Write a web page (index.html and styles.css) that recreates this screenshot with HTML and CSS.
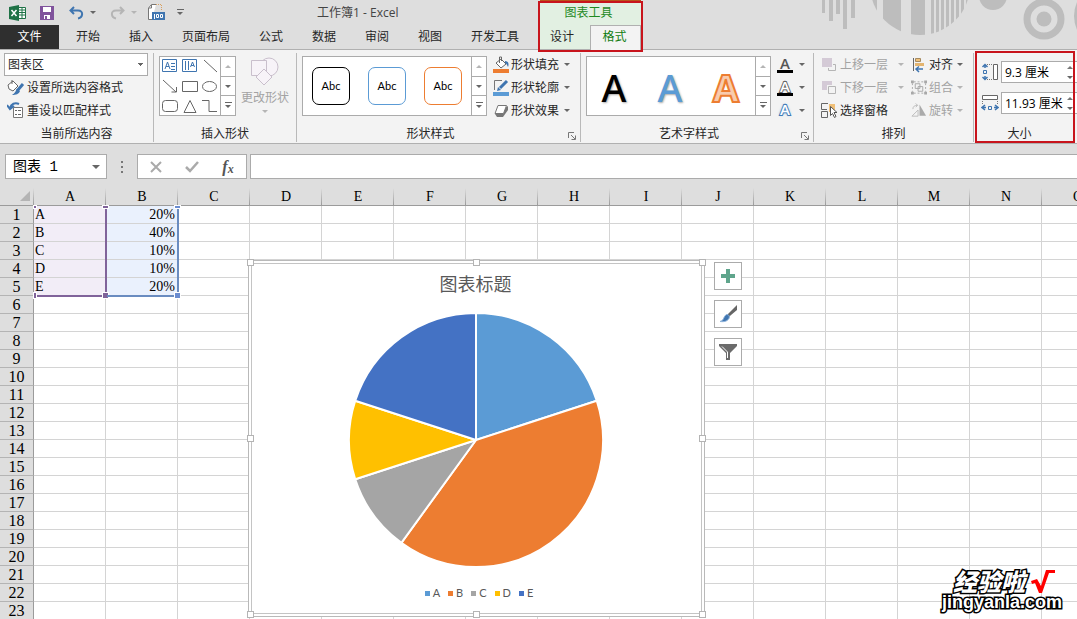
FILE: index.html
```html
<!DOCTYPE html>
<html lang="zh-CN">
<head>
<meta charset="utf-8">
<title>工作簿1 - Excel</title>
<link rel="stylesheet" href="styles.css">
</head>
<body>
<div class="app">
  <header class="header">
    <svg class="header-art" width="270" height="49" viewBox="0 0 270 49" aria-hidden="true">
      <defs><clipPath id="disc"><circle cx="113" cy="-15" r="50"/></clipPath></defs>
      <g fill="#bdbdbd">
        <path d="M15 0h3v13h-3zM22 0h4v21h-4zM29 0h4v14h-4zM36 0h4v29h-4zM44 0h4v18h-4z"/>
        <g clip-path="url(#disc)"><path d="M63 0h7v20h-7zM76 0h18v36H76zM104 0h14v36h-14zM124 0h3v36h-3zM129 0h3v36h-3zM134 0h3v36h-3zM139 0h3v36h-3zM144 0h3v36h-3zM149 0h3v36h-3zM154 0h3v36h-3zM159 0h4v36h-4z"/></g>
        <circle cx="186" cy="-4" r="14"/>
        <circle cx="237" cy="19" r="7.500"/>
        <path d="M270 2q-6 14 0 28z"/>
      </g>
      <circle cx="237" cy="19" r="17" fill="none" stroke="#bdbdbd" stroke-width="7"/>
    </svg>
    <div class="header-main">
      <div class="title-row">
        <svg class="app-logo" width="18" height="16" viewBox="0 0 18 16"><path fill="#fff" stroke="#1f7246" d="M9 2.500h7.500v11H9z"/><path stroke="#1f7246" d="M10 5h6M10 7.500h6M10 10h6M13 3v10"/><path fill="#1f7246" d="M0 2l10-2v16L0 14z"/><path stroke="#fff" stroke-width="1.500" d="M2.500 5l5 6M7.500 5l-5 6"/></svg>
        <button class="quick save" aria-label="保存"><svg width="14" height="14" viewBox="0 0 14 14"><path fill="#80539c" d="M0 0h14v14H0z"/><path fill="#fff" d="M3 1h8v5H3zM4 9h6v4H4z"/><path fill="#80539c" d="M5 10h2v3H5z"/></svg></button>
        <button class="quick undo" aria-label="撤消"><svg width="15" height="14" viewBox="0 0 15 14"><path fill="none" stroke="#3f75b0" stroke-width="2" d="M5 1L1.500 4.500 5 8M2 4.500h7c6 0 5 7 0 8"/></svg><i class="caret"></i></button>
        <button class="quick redo" aria-label="恢复" disabled><svg width="15" height="14" viewBox="0 0 15 14"><path fill="none" stroke="#b5b5b5" stroke-width="2" d="M10 1l3.500 3.500L10 8M13 4.500H6c-6 0-5 7 0 8"/></svg><i class="caret"></i></button>
        <button class="quick zoom100" aria-label="缩放到 100%"><svg width="17" height="17" viewBox="0 0 17 17"><path fill="#fff" stroke="#777" d="M4 15.500H.500V4l3-3.500H8"/><path fill="none" stroke="#777" d="M3.500 1v3H1"/><path fill="none" stroke="#d8a060" stroke-dasharray="1 1" d="M8 .500h5.500V7"/><path fill="#3f75b0" d="M4 8h13v8H4z"/><path fill="none" stroke="#fff" d="M6.500 10v5M8.500 10.500h2v3h-2zM12.500 10.500h2v3h-2z"/></svg></button>
        <button class="quick more" aria-label="自定义快速访问工具栏"><i class="bar-caret"></i></button>
        <h1 class="doc-title">工作簿1 - Excel</h1>
      </div>
      <nav class="tabs">
        <button class="tab file">文件</button>
        <button class="tab">开始</button>
        <button class="tab">插入</button>
        <button class="tab">页面布局</button>
        <button class="tab">公式</button>
        <button class="tab">数据</button>
        <button class="tab">审阅</button>
        <button class="tab">视图</button>
        <button class="tab">开发工具</button>
      </nav>
    </div>
    <div class="contextual">
      <div class="contextual-title">图表工具</div>
      <nav class="tabs contextual-tabs">
        <button class="tab">设计</button>
        <button class="tab active">格式</button>
      </nav>
      <div class="mark mark-tabs"></div>
    </div>
  </header>

  <section class="ribbon">
    <div class="group g-selection">
      <div class="group-body stack">
        <select class="area-select" aria-label="图表元素"><option>图表区</option></select>
        <button class="cmd"><svg width="18" height="17" viewBox="0 0 18 17"><path fill="#fff" stroke="#666" d="M1 6l5-4 5 5-5 5-4-2zM5 5V1"/><path stroke="#3f75b0" stroke-width="3" d="M16 5l-6 7"/><path fill="#3f75b0" d="M10 10l3 2c-1 3-4 4-8 4 3-2 3-3 5-6z"/></svg>设置所选内容格式</button>
        <button class="cmd"><svg width="18" height="17" viewBox="0 0 18 17"><path fill="#fff" stroke="#777" d="M6.500 5.500h9v10h-9z"/><path stroke="#666" d="M8 8.500h2M11 8.500h3M8 12.500h2M11 12.500h3"/><path fill="none" stroke="#3f75b0" stroke-width="2" d="M12 2C8 0 4 2 3 6M0 3l3 4 4-3"/></svg>重设以匹配样式</button>
      </div>
      <div class="group-foot"><span>当前所选内容</span></div>
    </div>

    <div class="group g-shapes">
      <div class="group-body">
        <div class="gallery">
          <div class="gallery-items">
            <svg width="60" height="58" viewBox="0 0 60 58" fill="none" stroke="#666"><path stroke="#3f75b0" d="M2.500 2.500h14v12h-14zM5 12l2.500-7L10 12M6 9.500h3M11 6.500h4M11 9.500h4M11 12.500h4M22.500 2.500h14v12h-14zM25.500 4v9M28.500 4v9M30.500 10l2-5 2 5M31 8.500h3"/><path d="M44 3l13 12M3 23l13 12M16.500 30v5h-5M22.500 24.500h15v10h-15zM24 55.500l6-12 6 12zM42 43.500h7v11h8"/><ellipse cx="49.500" cy="29.500" rx="7" ry="5"/><rect x="2.500" y="43.500" width="15" height="11" rx="3"/></svg>
          </div>
          <div class="gallery-scroll"><button aria-label="上一行" disabled><i class="caret up"></i></button><button aria-label="下一行"><i class="caret"></i></button><button aria-label="其他形状"><i class="bar-caret"></i></button></div>
        </div>
        <button class="big-cmd" disabled><svg width="30" height="30" viewBox="0 0 30 30" fill="#f7f3f8" stroke="#c9bfcc"><circle cx="19" cy="10" r="9"/><path d="M1.500 3.500h15v15h-15z"/><path d="M14 12l8 8-8 8-8-8z"/></svg><span>更改形状</span><i class="caret"></i></button>
      </div>
      <div class="group-foot"><span>插入形状</span></div>
    </div>

    <div class="group g-styles">
      <div class="group-body">
        <div class="gallery wide">
          <div class="gallery-items swatches">
            <button class="swatch black">Abc</button>
            <button class="swatch blue">Abc</button>
            <button class="swatch orange">Abc</button>
          </div>
          <div class="gallery-scroll"><button aria-label="上一行" disabled><i class="caret up"></i></button><button aria-label="下一行"><i class="caret"></i></button><button aria-label="其他样式"><i class="bar-caret"></i></button></div>
        </div>
        <div class="stack">
          <button class="cmd"><svg width="17" height="17" viewBox="0 0 17 17"><path fill="#fff" stroke="#666" d="M3 7l5-4 5 5-5 4zM6.500 7V1h2v4"/><path fill="#3f75b0" d="M12 5c4 0 4 4 3 6-1-2-1-3-3-4z"/><path fill="#ed7d31" d="M0 13h16v4H0z"/></svg>形状填充<i class="caret"></i></button>
          <button class="cmd"><svg width="17" height="17" viewBox="0 0 17 17"><path fill="none" stroke="#777" d="M9 1.500H1.500V11"/><path stroke="#3f75b0" stroke-width="3" d="M14 2L7 9"/><path fill="#3f75b0" d="M5 8l3 3-4 1z"/><path fill="#5b9bd5" d="M0 13h16v4H0z"/></svg>形状轮廓<i class="caret"></i></button>
          <button class="cmd"><svg width="17" height="17" viewBox="0 0 17 17"><path fill="#777" d="M2 12l2 3h6l5-7V4z"/><path fill="#fff" stroke="#777" d="M5 3.500h8.500l-3 8H2z"/></svg>形状效果<i class="caret"></i></button>
        </div>
      </div>
      <div class="group-foot"><span>形状样式</span><button class="launcher" aria-label="设置形状格式"><svg width="8" height="8" viewBox="0 0 8 8" fill="none" stroke="#777"><path d="M.500 6V.500H6M3 3l4 4M7.500 3.500v4h-4"/></svg></button></div>
    </div>

    <div class="group g-wordart">
      <div class="group-body">
        <div class="gallery wide">
          <div class="gallery-items letters">
            <button class="letter l-black">A</button>
            <button class="letter l-blue">A</button>
            <button class="letter l-orange">A</button>
          </div>
          <div class="gallery-scroll"><button aria-label="上一行" disabled><i class="caret up"></i></button><button aria-label="下一行"><i class="caret"></i></button><button aria-label="其他艺术字"><i class="bar-caret"></i></button></div>
        </div>
        <div class="stack">
          <button class="cmd text-cmd" aria-label="文本填充"><b class="glyph fill">A</b><i class="caret"></i></button>
          <button class="cmd text-cmd" aria-label="文本轮廓"><b class="glyph outline">A</b><i class="caret"></i></button>
          <button class="cmd text-cmd" aria-label="文本效果"><b class="glyph glow">A</b><i class="caret"></i></button>
        </div>
      </div>
      <div class="group-foot"><span>艺术字样式</span><button class="launcher" aria-label="设置文本效果格式"><svg width="8" height="8" viewBox="0 0 8 8" fill="none" stroke="#777"><path d="M.500 6V.500H6M3 3l4 4M7.500 3.500v4h-4"/></svg></button></div>
    </div>

    <div class="group g-arrange">
      <div class="group-body">
        <div class="stack order">
          <button class="cmd" disabled><svg width="17" height="17" viewBox="0 0 17 17"><path fill="#d4cad6" d="M1 2h10v9H1z"/><path fill="none" stroke="#b5b5b5" d="M12 8.500h2.500v6h-7V12"/></svg>上移一层<i class="caret"></i></button>
          <button class="cmd" disabled><svg width="17" height="17" viewBox="0 0 17 17"><path fill="#d4cad6" d="M1 2h10v4H6v5H1z"/><path fill="none" stroke="#b5b5b5" d="M7.500 7.500h7v7h-7z"/></svg>下移一层<i class="caret"></i></button>
          <button class="cmd"><svg width="17" height="17" viewBox="0 0 17 17"><path fill="#f0c078" d="M8 2h6v8H8z"/><path fill="none" stroke="#666" d="M7 1.500H.500v6H6M.500 9.500h6v6h-6z"/><path fill="#fff" stroke="#555" d="M9.500 4.500v9l2-2 2 4 1.500-1-2-4h3z"/></svg>选择窗格</button>
        </div>
        <div class="stack align">
          <button class="cmd"><svg width="14" height="17" viewBox="0 0 14 17"><path stroke="#666" d="M1.500 2v13"/><path fill="#f0c078" stroke="#a58a60" d="M3.500 2.500h5v3h-5z"/><path fill="#e4b570" d="M3 7h9v3H3z"/><path fill="none" stroke="#3f75b0" stroke-width="1.500" d="M11 13H4M7 10.500L4 13l3 3"/></svg>对齐<i class="caret"></i></button>
          <button class="cmd" disabled><svg width="17" height="17" viewBox="0 0 17 17" fill="none" stroke="#a8a8a8"><path d="M3 2.500h11M3 14.500h11M1.500 4v9M15.500 4v9" stroke-dasharray="2 2"/><path d="M4.500 4.500h5v5h-5zM7.500 7.500h5v5h-5z"/><path fill="#a8a8a8" stroke="none" d="M0 1h3v3H0zM14 1h3v3h-3zM0 13h3v3H0zM14 13h3v3h-3z"/></svg>组合<i class="caret"></i></button>
          <button class="cmd" disabled><svg width="17" height="17" viewBox="0 0 17 17"><path fill="#aaa" d="M9 2v12h7z"/><path fill="none" stroke="#bbb" d="M7.500 8v6.500H1zM2 7c0-3 2-4 5-4M5 1l2 2-2 2"/></svg>旋转<i class="caret"></i></button>
        </div>
      </div>
      <div class="group-foot"><span>排列</span></div>
    </div>

    <div class="group g-size">
      <div class="group-body sizes">
        <label class="size-row"><svg width="18" height="18" viewBox="0 0 18 18"><path fill="none" stroke="#3f75b0" stroke-width="1.500" d="M4 1v4M1.500 4L4 1.500 6.500 4M4 13v4M1.500 14L4 16.500 6.500 14"/><path fill="none" stroke="#3f75b0" d="M2.500 7.500h3v3h-3z"/><path fill="none" stroke="#777" stroke-dasharray="1 1" d="M6 1.500h5M6 16.500h5"/><path fill="#fff" stroke="#666" d="M12.500 1.500h4v15h-4z"/></svg><input class="size-input" aria-label="形状高度" value="9.3 厘米"><span class="spin"><i class="caret up"></i><i class="caret"></i></span></label>
        <label class="size-row"><svg width="18" height="18" viewBox="0 0 18 18"><path fill="#fff" stroke="#666" d="M1.500 1.500h15v4h-15z"/><path fill="none" stroke="#777" stroke-dasharray="1 1" d="M1.500 7v4M16.500 7v4"/><path fill="none" stroke="#3f75b0" stroke-width="1.500" d="M4 11l-3 2.500L4 16M1 13.500h4M14 11l3 2.500-3 2.500M17 13.500h-4"/><path fill="none" stroke="#3f75b0" d="M7.500 12.500h3v3h-3z"/></svg><input class="size-input" aria-label="形状宽度" value="11.93 厘米"><span class="spin"><i class="caret up"></i><i class="caret"></i></span></label>
      </div>
      <div class="group-foot"><span>大小</span></div>
      <div class="mark mark-size"></div>
    </div>
  </section>

  <section class="formula-bar">
    <button class="name-box"><span>图表 1</span><i class="caret big"></i></button>
    <span class="dots"><i></i><i></i><i></i></span>
    <div class="fx-buttons">
      <button aria-label="取消"><svg width="12" height="12" viewBox="0 0 12 12"><path stroke="#aaa" stroke-width="2" d="M1 1l10 10M11 1L1 11"/></svg></button>
      <button aria-label="输入"><svg width="14" height="12" viewBox="0 0 14 12"><path fill="none" stroke="#aaa" stroke-width="2.500" d="M1 6l4 4 8-9"/></svg></button>
      <button class="fx" aria-label="插入函数">f<sub>x</sub></button>
    </div>
    <input class="formula-input" aria-label="编辑栏">
  </section>

  <main class="sheet">
    <table class="grid">
      <thead><tr id="columns"><th class="corner"><svg width="10" height="10" viewBox="0 0 10 10"><path fill="#b4b4b4" d="M10 0v10H0z"/></svg></th></tr></thead>
      <tbody id="rows"></tbody>
    </table>

    <div class="range range-a"><i class="tl"></i><i class="tr"></i><i class="bl"></i><i class="br"></i></div>
    <div class="range range-b"><i class="tr"></i><i class="br"></i></div>

    <figure class="chart">
      <div class="plot">
        <figcaption class="chart-title">图表标题</figcaption>
        <svg class="pie" width="256" height="256" viewBox="-129 -129 258 258" stroke="#fff" stroke-width="2" stroke-linejoin="round">
          <path fill="#5b9bd5" d="M0 0V-128A128 128 0 0 1 121.700 -39.600z"/>
          <path fill="#ed7d31" d="M0 0L121.700 -39.600A128 128 0 0 1 -75.200 103.600z"/>
          <path fill="#a5a5a5" d="M0 0L-75.200 103.600A128 128 0 0 1 -121.700 39.600z"/>
          <path fill="#ffc000" d="M0 0L-121.700 39.600A128 128 0 0 1 -121.700 -39.600z"/>
          <path fill="#4472c4" d="M0 0L-121.700 -39.600A128 128 0 0 1 0 -128z"/>
        </svg>
        <ul class="legend"><li class="k1">A</li><li class="k2">B</li><li class="k3">C</li><li class="k4">D</li><li class="k5">E</li></ul>
      </div>
      <i class="handle n w"></i><i class="handle n c"></i><i class="handle n e"></i>
      <i class="handle m w"></i><i class="handle m e"></i>
      <i class="handle s w"></i><i class="handle s c"></i><i class="handle s e"></i>
    </figure>

    <div class="chart-tools">
      <button aria-label="图表元素"><svg width="20" height="20" viewBox="0 0 20 20"><path fill="#5fa58c" d="M8 3h4v5h5v4h-5v5H8v-5H3V8h5z"/></svg></button>
      <button aria-label="图表样式"><svg width="20" height="20" viewBox="0 0 20 20"><path fill="#666" d="M19 1v5l-6 5-2-2zM11 9l2 2-2 2-2-2z"/><path fill="#3f75b0" stroke="#8fb4dc" d="M9 10.500c2 0 3 2 2 4-2 3-5 3.500-9 3 3-1 3-2 4-4s2-3 3-3z"/></svg></button>
      <button aria-label="图表筛选器"><svg width="20" height="20" viewBox="0 0 20 20"><path fill="#6b6b6b" d="M1 2h18v2l-7 7v7H8v-7L1 4z"/><path fill="none" stroke="#fff" d="M4 4.500l5.500 5.500v6"/></svg></button>
    </div>
  </main>

  <div class="watermark">
    <div class="wm-name"><span>经验啦</span><svg width="24" height="24" viewBox="0 0 24 24"><path fill="#f00" d="M0 12l6-2 4 7L15 1h9v3h-6l-7 20H8L4 14l-3 1z"/></svg></div>
    <div class="wm-url">jingyanla.com</div>
  </div>
</div>
<script src="grid.js"></script>
</body>
</html>
```
FILE: grid.js
```js
const columns = "ABCDEFGHIJKLMNO".split("");
const data = [["A", "20%"], ["B", "40%"], ["C", "10%"], ["D", "10%"], ["E", "20%"]];
const rowCount = 23;

const head = document.getElementById("columns");
columns.forEach(name => {
  const th = document.createElement("th");
  th.scope = "col";
  th.textContent = name;
  head.append(th);
});

const body = document.getElementById("rows");
for (let r = 0; r < rowCount; r++) {
  const tr = body.insertRow();
  const th = document.createElement("th");
  th.scope = "row";
  th.textContent = r + 1;
  tr.append(th);
  columns.forEach((_, c) => {
    const td = tr.insertCell();
    if (data[r] && data[r][c]) {
      td.textContent = data[r][c];
      td.className = c === 0 ? "category" : "value";
    }
  });
}
```
FILE: styles.css
```css
* { box-sizing: border-box; }

body {
  margin: 0;
  font: 12px/16px "Open Sans", "Noto Sans CJK SC", sans-serif;
  color: #262626;
  background: #dedede;
}

button, input, select {
  font: inherit;
  color: inherit;
  margin: 0;
  padding: 0;
  border: 0;
  border-radius: 0;
  background: none;
}

svg { display: block; flex: none; }

.app {
  position: relative;
  height: 100vh;
  display: flex;
  flex-direction: column;
  overflow: hidden;
}

/* Carets */
.caret {
  flex: none;
  width: 0;
  height: 0;
  border: 3px solid transparent;
  border-top-color: #666;
  border-bottom-width: 0;
}
.caret.up { border-width: 0 3px 3px; border-bottom-color: #777; }
.caret.big { border-width: 4px 4px 0; }
:disabled .caret { border-top-color: #b5b5b5; }
:disabled .caret.up { border-bottom-color: #b5b5b5; }
.bar-caret {
  display: block;
  width: 7px;
  height: 7px;
  border-top: 1px solid #666;
  padding-top: 2px;
}
.bar-caret::after {
  content: "";
  display: block;
  width: 0;
  border: 3px solid transparent;
  border-top-color: #666;
  border-bottom: 0;
}

/* Header */
.header { position: relative; display: flex; flex: none; }
.header-art { position: absolute; top: 0; right: 0; }
.header-main { width: 540px; }
.title-row { display: flex; align-items: center; height: 25px; padding-left: 9px; }
.quick { display: flex; align-items: center; gap: 6px; height: 22px; }
.save { margin-left: 13px; }
.undo { margin-left: 15px; }
.redo { margin-left: 14px; }
.zoom100 { margin-left: 11px; }
.more { margin-left: 12px; }
.doc-title { margin: 0 0 0 133px; font-size: 12px; font-weight: 400; color: #444; }

.tabs { display: flex; gap: 1px; }
.tab { height: 24px; padding: 0 14px; white-space: nowrap; }
.tab.file { width: 59px; margin-right: 2px; background: #2f2f2f; color: #fff; }
.contextual { position: relative; width: 101px; border-top: 3px solid #b9541c; background: #e2f0e2; }
.contextual-title { height: 22px; line-height: 20px; text-align: center; color: #1e8a1e; padding-right: 4px; }
.contextual-tabs { gap: 0; }
.contextual-tabs .tab { width: 50px; padding: 0 6px 0 0; }
.contextual-tabs .active {
  position: relative;
  flex: 1;
  height: 25px;
  margin-bottom: -1px;
  padding: 0 2px 2px 0;
  z-index: 1;
  border: 1px solid #b0b0b0;
  border-bottom: 0;
  background: #f3f3f3;
  color: #107c10;
}
.mark { position: absolute; border: 2px solid #c8141c; z-index: 2; pointer-events: none; }
.mark-tabs { inset: -2px -2px -3px -2px; }
.mark-size { inset: -2px 2px -1px 1px; }

/* Ribbon */
.ribbon {
  display: flex;
  flex: none;
  padding: 3px 0 1px;
  background: #f3f3f3;
  border-top: 1px solid #b0b0b0;
  border-bottom: 1px solid #b0b0b0;
}
.group { position: relative; display: flex; flex-direction: column; flex: none; border-right: 1px solid #b9b9b9; }
.group-body { display: flex; height: 72px; }
.group-foot { display: flex; height: 17px; padding-top: 1px; }
.group-foot span { flex: 1; text-align: center; }
.launcher { width: 16px; display: flex; justify-content: center; align-items: center; padding-top: 4px; }
.g-selection { width: 154px; }
.g-shapes { width: 143px; }
.g-styles { width: 284px; }
.g-wordart { width: 233px; }
.g-arrange { width: 160px; }
.g-size { flex: 1; min-width: 0; border-right: 0; }
.g-size .group-foot { padding-right: 12px; }

.stack { display: flex; flex-direction: column; }
.cmd { display: flex; align-items: center; height: 23px; gap: 2px; white-space: nowrap; }
.cmd .caret { margin-left: 3px; }
.cmd:disabled, .big-cmd:disabled { color: #a3a3a3; }
.g-selection .stack { padding: 0 5px 0 4px; }
.g-selection .cmd { padding-left: 3px; }
.area-select {
  height: 23px;
  padding-left: 3px;
  border: 1px solid #ababab;
  appearance: none;
  background-color: #fff;
  background-image: linear-gradient(#666, #666), linear-gradient(#666, #666), linear-gradient(#666, #666);
  background-repeat: no-repeat;
  background-position: right 4px top 9px, right 5px top 10px, right 6px top 11px;
  background-size: 5px 1px, 3px 1px, 1px 1px;
}

.gallery { display: flex; flex: none; width: 77px; height: 60px; margin: 3px 0 0 5px; border: 1px solid #ababab; background: #fff; }
.gallery.wide { width: 185px; }
.gallery-items { flex: 1; min-width: 0; }
.gallery-scroll { display: flex; flex-direction: column; width: 15px; border-left: 1px solid #ababab; }
.gallery-scroll button { flex: 1; display: flex; align-items: center; justify-content: center; }
.gallery-scroll button + button { border-top: 1px solid #ababab; }
.big-cmd { display: flex; flex-direction: column; align-items: center; width: 58px; padding-top: 4px; }
.big-cmd span { margin: 3px 0 4px; }

.swatches { display: flex; align-items: center; gap: 18px; padding-left: 9px; }
.swatch { width: 38px; height: 38px; border: 1px solid; border-radius: 7px; font: 11px/16px Lato, sans-serif; color: #000; background: #fff; }
.swatch.black { border-color: #000; }
.swatch.blue { border-color: #5b9bd5; }
.swatch.orange { border-color: #ed7d31; }
.g-styles .stack { margin-left: 6px; }
.g-styles .cmd { gap: 1px; }
.g-styles .cmd .caret { margin-left: 4px; }

.letters { display: flex; align-items: center; gap: 18px; padding: 2px 0 0 8px; }
.letter { width: 38px; font: 700 38px/40px "Noto Sans", sans-serif; }
.l-black { color: #000; font-weight: 500; text-shadow: 1px 1px 2px #aaa; }
.l-blue { color: #5b9bd5; font-weight: 500; text-shadow: 1px 1px 2px #aaa; }
.l-orange { color: #f8cbad; -webkit-text-stroke: 2px #ed7d31; }
.g-wordart .stack { margin-left: 6px; }
.glyph { width: 16px; height: 16px; text-align: center; font: 600 15px/13px "Open Sans", sans-serif; paint-order: stroke fill; }
.text-cmd .caret { margin-left: 4px; }
.fill { border-bottom: 3px solid #000; color: #555; }
.outline { border-bottom: 3px solid #000; color: #fff; -webkit-text-stroke: 2px #666; }
.glow { color: #fff; -webkit-text-stroke: 2px #3f75b0; text-shadow: 0 0 3px #5b9bd5; }

.order { margin-left: 7px; width: 90px; }
.order .cmd .caret { margin-left: 8px; }
.align .cmd svg { width: 16px; }
.align .cmd .caret { margin-left: 2px; }
.align .cmd { gap: 2px; }

.sizes { flex-direction: column; gap: 9px; padding: 8px 0 0 7px; }
.size-row { display: flex; align-items: center; gap: 2px; height: 22px; }
.size-input { flex: 1; min-width: 0; height: 22px; padding-left: 3px; border: 1px solid #ababab; border-right: 0; background: #fff; color: #000; }
.spin { display: flex; flex: none; flex-direction: column; justify-content: space-around; width: 10px; height: 22px; margin-left: -2px; border: solid #ababab; border-width: 1px 0; background: #fff; }

/* Formula bar */
.formula-bar { display: flex; flex: none; height: 35px; padding-top: 10px; padding-left: 5px; }
.formula-bar > * { height: 25px; }
.name-box { display: flex; align-items: center; justify-content: space-between; width: 102px; padding: 0 6px 0 7px; border: 1px solid #ababab; background: #fff; font: 14px/20px "Liberation Mono", "Noto Sans CJK SC", monospace; color: #000; }
.dots { display: flex; flex-direction: column; align-items: center; justify-content: center; gap: 3px; width: 30px; }
.dots i { width: 2px; height: 2px; background: #777; }
.fx-buttons { display: flex; width: 110px; border: 1px solid #ababab; background: #fff; }
.fx-buttons button { flex: 1; display: flex; align-items: center; justify-content: center; }
.fx-buttons .fx { font: italic bold 16px/20px "Liberation Serif", serif; color: #555; }
.fx sub { font-size: 12px; line-height: 12px; vertical-align: baseline; padding-top: 4px; }
.formula-input { flex: 1; min-width: 0; margin-left: 3px; border: 1px solid #ababab; border-right: 0; background: #fff; }

/* Worksheet */
.sheet { position: relative; flex: 1; min-height: 0; overflow: hidden; }
.grid { width: 1114px; table-layout: fixed; border-collapse: separate; border-spacing: 0; background: #fff; font: 14px/17px "Liberation Serif", "Noto Sans CJK SC", serif; color: #000; }
.grid th, .grid td { padding: 0; height: 18px; font-weight: 400; border-right: 1px solid #d4d4d4; border-bottom: 1px solid #d4d4d4; white-space: nowrap; }
.grid thead th {
  height: 27px;
  padding-top: 9px;
  border-right: 0;
  border-bottom-color: #9b9b9b;
  background: linear-gradient(#dedede 9px, #9b9b9b) no-repeat right / 1px 100%, #dedede;
}
.grid .corner { width: 34px; }
.corner svg { margin: 0 0 2px 20px; }
.grid tbody th { background: #dedede; border-color: #b4b4b4; border-right-color: #9b9b9b; font-size: 16px; }
.grid .category { padding-left: 1px; background: #f2edf7; }
.grid .value { padding-right: 2px; text-align: right; background: #eaf1fd; }

.range { position: absolute; top: 27px; height: 91px; border: solid; border-width: 0 2px 2px 0; }
.range-a { left: 34px; width: 73px; border-color: #80639a; }
.range-b { left: 107px; width: 72px; border-color: #6a8cc0; }
.range i { position: absolute; width: 5px; height: 5px; background: #80639a; outline: 1px solid #fff; }
.range-b i { background: #6a8cd0; }
.range .tl, .range .tr { top: 0; height: 2px; }
.range .bl, .range .br { bottom: -3px; }
.range .tl, .range .bl { left: 0; width: 2px; }
.range .tr, .range .br { right: -3px; }

/* Chart */
.chart { position: absolute; left: 248px; top: 81px; width: 457px; height: 357px; margin: 0; padding: 2px; border: 1px solid #b9b9b9; background: #fff; }
.plot { display: flex; flex-direction: column; align-items: center; height: 100%; padding-right: 2px; border: 1px solid #c4c4c4; }
.chart-title { margin-top: 8px; font-size: 18px; line-height: 24px; color: #595959; }
.pie { margin-top: 16px; }
.legend { display: flex; gap: 8px; margin: 17px 0 0; padding: 0 0 0 7px; list-style: none; font: 11px/16px Lato, sans-serif; color: #595959; }
.legend li { display: flex; align-items: center; gap: 3px; }
.legend li::before { content: ""; width: 5px; height: 5px; background: #5b9bd5; }
.legend .k2::before { background: #ed7d31; }
.legend .k3::before { background: #a5a5a5; }
.legend .k4::before { background: #ffc000; }
.legend .k5::before { background: #4472c4; }
.handle { position: absolute; width: 7px; height: 7px; border: 1px solid #b4b4b4; background: #fff; }
.handle.n { top: -2px; }
.handle.m { top: calc(50% - 4px); }
.handle.s { bottom: -2px; }
.handle.w { left: -2px; }
.handle.c { left: calc(50% - 4px); }
.handle.e { right: -2px; }

.chart-tools { position: absolute; left: 714px; top: 83px; display: flex; flex-direction: column; gap: 10px; }
.chart-tools button { display: flex; align-items: center; justify-content: center; width: 28px; height: 28px; border: 1px solid #ababab; background: #fff; }

/* Watermark */
.watermark { position: absolute; right: 15px; bottom: 8px; color: #fff; -webkit-text-stroke: 3px #000; paint-order: stroke fill; }
.wm-name { display: flex; gap: 6px; justify-content: flex-end; align-items: center; padding-right: 7px; font: italic 900 24px/24px "Noto Sans CJK SC", sans-serif; }
.wm-url { font: 700 18px/18px "Liberation Sans", sans-serif; text-align: right; }
```
